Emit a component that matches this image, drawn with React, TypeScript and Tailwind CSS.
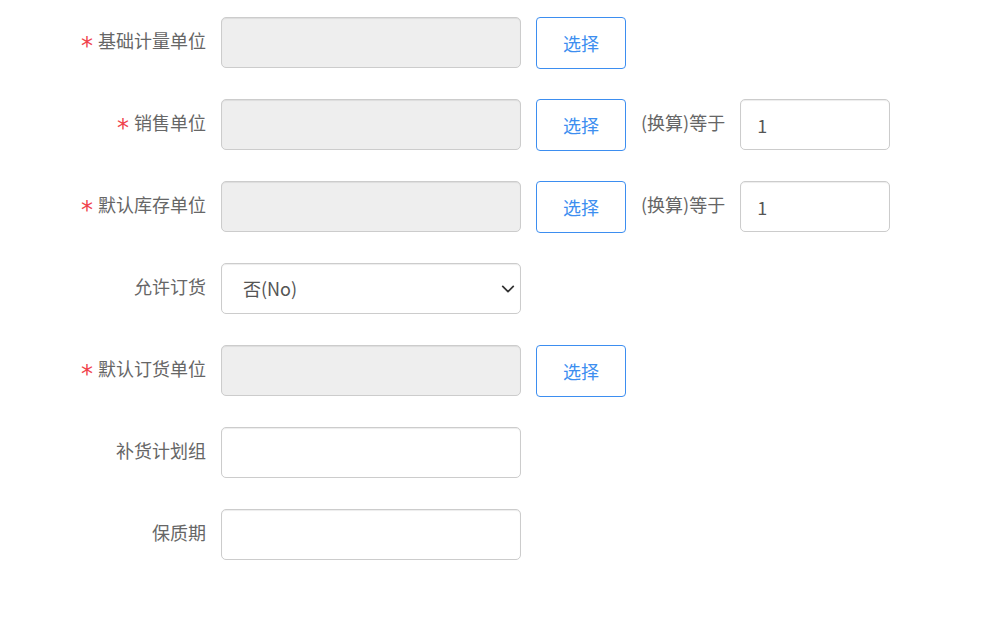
import React from 'react';

type Row = {
  label: string;
  required?: boolean;
  kind: 'disabled' | 'select' | 'text';
  pick?: boolean;
  ratio?: boolean;
};

const rows: Row[] = [
  { label: '基础计量单位', required: true, kind: 'disabled', pick: true },
  { label: '销售单位', required: true, kind: 'disabled', pick: true, ratio: true },
  { label: '默认库存单位', required: true, kind: 'disabled', pick: true, ratio: true },
  { label: '允许订货', kind: 'select' },
  { label: '默认订货单位', required: true, kind: 'disabled', pick: true },
  { label: '补货计划组', kind: 'text' },
  { label: '保质期', kind: 'text' },
];

const inputShadow = 'shadow-[inset_0_1px_1px_rgba(0,0,0,0.075)]';

export default function App() {
  return (
    <div
      className="w-[1006px] h-[628px] bg-white pt-[17px] flex flex-col gap-[30px] text-[18px] text-[#666]"
      style={{ fontFamily: '"Microsoft YaHei", "Noto Sans CJK SC", "Liberation Sans", sans-serif' }}
    >
      {rows.map((row) => (
        <div key={row.label} className="flex items-start h-[52px]">
          {/* Label */}
          <div className="w-[206px] h-[51px] flex items-center justify-end whitespace-nowrap -translate-y-[2px]">
            {row.required && (
              <span
                className="text-[#f0424b] text-[24px] leading-none mr-[5px] translate-y-[5px]"
                style={{ fontFamily: '"DejaVu Sans", sans-serif' }}
              >
                *
              </span>
            )}
            <span>{row.label}</span>
          </div>

          <div className="ml-[15px]">
            {row.kind === 'select' ? (
              <div className="relative w-[300px] h-[51px]">
                <select
                  className={`appearance-none w-full h-full rounded-[5px] border border-[#ccc] bg-white pl-[21px] text-[18px] text-[#555] outline-none ${inputShadow}`}
                  defaultValue="no"
                >
                  <option value="no">否(No)</option>
                  <option value="yes">是(Yes)</option>
                </select>
                <svg
                  className="absolute right-[6px] top-1/2 -translate-y-1/2 pointer-events-none"
                  width="14"
                  height="14"
                  viewBox="0 0 16 16"
                  fill="none"
                  stroke="#333"
                  strokeWidth="2"
                  strokeLinecap="round"
                  strokeLinejoin="round"
                >
                  <path d="M2 5l6 6 6-6" />
                </svg>
              </div>
            ) : (
              <input
                disabled={row.kind === 'disabled'}
                className={`w-[300px] h-[51px] rounded-[5px] border border-[#ccc] px-[16px] outline-none ${inputShadow} ${
                  row.kind === 'disabled' ? 'bg-[#eee]' : 'bg-white'
                }`}
              />
            )}
          </div>

          {row.pick && (
            <button className="ml-[15px] w-[90px] h-[52px] rounded-[4px] border border-[#3d8ef0] bg-white text-[18px] text-[#3d8ef0]">
              选择
            </button>
          )}

          {row.ratio && (
            <>
              <span className="ml-[15px] h-[51px] flex items-center whitespace-nowrap -translate-y-[2px]">(换算)等于</span>
              <input
                defaultValue="1"
                className={`ml-[15px] w-[150px] h-[51px] rounded-[5px] border border-[#ccc] bg-white px-[16px] text-[18px] text-[#555] outline-none ${inputShadow}`}
              />
            </>
          )}
        </div>
      ))}
    </div>
  );
}
